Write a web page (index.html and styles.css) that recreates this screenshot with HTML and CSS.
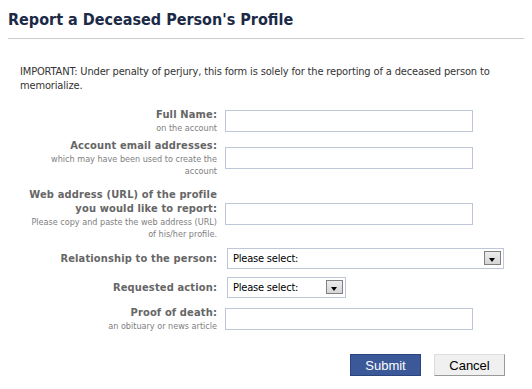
FILE: index.html
```html
<!DOCTYPE html>
<html lang="en">
<head>
    <meta charset="UTF-8">
    <title>Report a Deceased Person's Profile</title>
    <link rel="stylesheet" href="styles.css">
</head>
<body>
    <div class="page">
        <h1 class="title">Report a Deceased Person's Profile</h1>
        <p class="notice">IMPORTANT: Under penalty of perjury, this form is solely for the reporting of a deceased person to memorialize.</p>

        <form class="report-form">
            <div class="row row-name">
                <label class="label" for="full-name">Full Name:<span class="hint">on the account</span></label>
                <input class="text-input" type="text" id="full-name">
            </div>
            <div class="row row-email">
                <label class="label" for="emails">Account email addresses:<span class="hint">which may have been used to create the account</span></label>
                <input class="text-input" type="text" id="emails">
            </div>
            <div class="row">
                <label class="label" for="url">Web address (URL) of the profile you would like to report:<span class="hint">Please copy and paste the web address (URL) of his/her profile.</span></label>
                <input class="text-input" type="text" id="url">
            </div>
            <div class="row row-select">
                <label class="label" for="relationship">Relationship to the person:</label>
                <div class="select-wrap select-wide">
                    <select class="select" id="relationship">
                        <option>Please select:</option>
                        <option>Immediate family</option>
                        <option>Extended family</option>
                        <option>Non-family</option>
                    </select>
                    <span class="select-arrow"></span>
                </div>
            </div>
            <div class="row row-select">
                <label class="label" for="action">Requested action:</label>
                <div class="select-wrap select-narrow">
                    <select class="select" id="action">
                        <option>Please select:</option>
                        <option>Memorialize</option>
                        <option>Remove</option>
                    </select>
                    <span class="select-arrow"></span>
                </div>
            </div>
            <div class="row">
                <label class="label" for="proof">Proof of death:<span class="hint">an obituary or news article</span></label>
                <input class="text-input" type="text" id="proof">
            </div>

            <div class="buttons">
                <button class="button button-submit" type="submit">Submit</button>
                <button class="button button-cancel" type="button">Cancel</button>
            </div>
        </form>
    </div>
</body>
</html>
```

FILE: styles.css
```css
body {
    margin: 0;
    padding: 0;
    background: #fff;
    font-family: "DejaVu Sans Condensed", "DejaVu Sans", Tahoma, sans-serif;
    font-stretch: condensed;
    font-size: 11px;
    color: #333;
}
.page {
    margin: 0 8px;
}
.title {
    margin: 0;
    padding: 11px 0 9px;
    font-size: 16px;
    line-height: 18px;
    font-weight: bold;
    color: #1c2a47;
    border-bottom: 1px solid #ccc;
}
.notice {
    margin: 26px 0 0 12px;
    line-height: 14px;
    letter-spacing: -0.15px;
    color: #333;
}
.report-form {
    margin-top: 15px;
}
.row {
    display: grid;
    grid-template-columns: 209px 248px;
    column-gap: 8px;
    align-items: center;
    margin-bottom: 8px;
}
.row-name {
    margin-bottom: 5px;
}
.row-email {
    margin-bottom: 11px;
}
.label {
    box-sizing: border-box;
    padding-left: 17px;
    text-align: right;
    font-weight: bold;
    color: #666;
    line-height: 14px;
    letter-spacing: 0.15px;
}
.hint {
    display: block;
    font-weight: normal;
    font-size: 9px;
    line-height: 12px;
    letter-spacing: 0;
    color: #808080;
}
.text-input {
    box-sizing: border-box;
    width: 248px;
    height: 22px;
    margin: 0;
    border: 1px solid #bdc7d8;
    padding: 3px;
    font-family: inherit;
    font-size: 11px;
}
.select-wrap {
    position: relative;
    margin-left: 2px;
    height: 21px;
}
.select-wide {
    width: 277px;
}
.select-narrow {
    width: 119px;
}
.select {
    box-sizing: border-box;
    width: 100%;
    height: 21px;
    margin: 0;
    padding: 0 0 0 5px;
    border: 1px solid #bdc7d8;
    background: #fff;
    appearance: none;
    -webkit-appearance: none;
    font-family: inherit;
    font-stretch: condensed;
    font-size: 11px;
    letter-spacing: -0.2px;
    color: #000;
}
.select-arrow {
    position: absolute;
    top: 3px;
    right: 3px;
    width: 17px;
    height: 14px;
    box-sizing: border-box;
    border: 1px solid #808080;
    background: linear-gradient(to bottom, #ececec, #d6d6d6);
    pointer-events: none;
}
.select-arrow:after {
    content: "";
    position: absolute;
    left: 4px;
    top: 6px;
    border-left: 3.5px solid transparent;
    border-right: 3.5px solid transparent;
    border-top: 4px solid #000;
}
.buttons {
    display: flex;
    justify-content: flex-end;
    gap: 13px;
    margin: 22px 19px 0 0;
}
.button {
    box-sizing: border-box;
    height: 22px;
    padding: 0;
    font-family: "Liberation Sans", Arial, sans-serif;
    font-stretch: normal;
    font-size: 13px;
    cursor: pointer;
}
.button-submit {
    width: 71px;
    background: #3b5998;
    border: 1px solid #29447e;
    color: #fff;
}
.button-cancel {
    width: 71px;
    background: #f0f0f0;
    border: 1px solid #ddd;
    border-right-color: #999;
    border-bottom-color: #999;
    color: #000;
}
```
